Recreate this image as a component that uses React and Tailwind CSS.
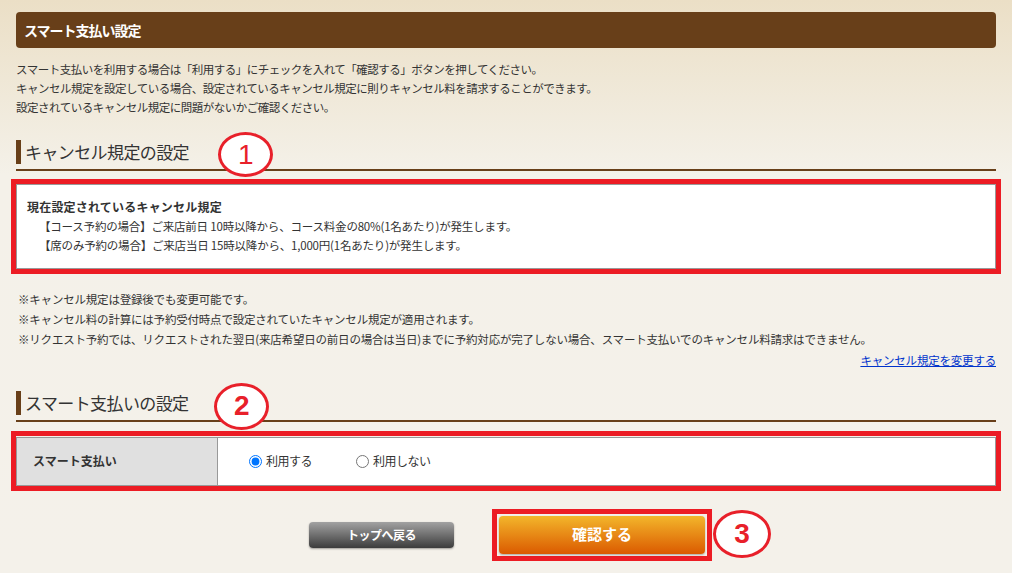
import React from "react";

function Circle({ n, className, bold }) {
  return (
    <div
      className={
        "absolute flex items-center justify-center rounded-[50%] border-[3px] border-[#e8202a] bg-white text-[#e8202a] font-['Liberation_Sans',Arial,sans-serif] leading-none " +
        className
      }
    >
      <span className={bold ? "text-[28px] font-bold" : "text-[28px]"}>{n}</span>
    </div>
  );
}

function SectionTitle({ children, circle }) {
  return (
    <div>
      <div className="relative flex h-6 items-center border-l-[5px] border-[#683f19] pl-[4px] text-[17px] tracking-[-0.6px] text-[#333]">
        {children}
        {circle}
      </div>
      <div className="mt-[5px] h-[2px] bg-[#683f19]" />
    </div>
  );
}

export default function App() {
  return (
    <div className="min-h-[573px] bg-[linear-gradient(to_bottom,#ebdfc6_0px,#f4f1e9_175px,#f4f1ea_100%)] px-4 pt-3 pb-3 font-['Noto_Sans_CJK_JP','Noto_Sans',sans-serif] text-[#333]">
      <div className="flex h-9 items-center rounded-[4px] bg-[#683f19] pl-2 text-[14px] font-bold tracking-[-1px] text-white">
        スマート支払い設定
      </div>

      <div className="mt-3 text-[11.5px] leading-[19px] tracking-[-0.5px]">
        <p>スマート支払いを利用する場合は「利用する」にチェックを入れて「確認する」ボタンを押してください。</p>
        <p>キャンセル規定を設定している場合、設定されているキャンセル規定に則りキャンセル料を請求することができます。</p>
        <p>設定されているキャンセル規定に問題がないかご確認ください。</p>
      </div>

      <div className="mt-[23px]">
        <SectionTitle circle={<Circle n="1" className="left-[197px] top-[-8px] h-[45px] w-[55px]" />}>
          キャンセル規定の設定
        </SectionTitle>
      </div>

      <div className="-mx-[5px] mt-2 border-[5px] border-[#ec1c24]">
        <div className="border border-[#999] bg-white py-3 pl-[10px] text-[11.5px] leading-[19.5px] tracking-[-0.2px]">
          <p className="text-[12px] font-bold tracking-[0.2px]">現在設定されているキャンセル規定</p>
          <p className="ml-3">【コース予約の場合】ご来店前日 10時以降から、コース料金の80%(1名あたり)が発生します。</p>
          <p className="ml-3">【席のみ予約の場合】ご来店当日 15時以降から、1,000円(1名あたり)が発生します。</p>
        </div>
      </div>

      <div className="mt-[15px] pl-[2px] text-[11.5px] leading-[20px] tracking-[-0.2px]">
        <p>※キャンセル規定は登録後でも変更可能です。</p>
        <p>※キャンセル料の計算には予約受付時点で設定されていたキャンセル規定が適用されます。</p>
        <p>※リクエスト予約では、リクエストされた翌日(来店希望日の前日の場合は当日)までに予約対応が完了しない場合、スマート支払いでのキャンセル料請求はできません。</p>
        <p className="mt-[1px] text-right">
          <a href="#" className="text-[#0033cc] underline">キャンセル規定を変更する</a>
        </p>
      </div>

      <div className="mt-[21px]">
        <SectionTitle circle={<Circle n="2" bold className="left-[193px] top-[-8px] h-[47px] w-[55px]" />}>
          スマート支払いの設定
        </SectionTitle>
      </div>

      <div className="-mx-[5px] mt-[9px] border-[5px] border-[#ec1c24] pt-[1px]">
        <div className="flex h-[49px] border border-[#999] bg-white text-[12px]">
          <div className="flex w-[201px] items-center border-r border-[#999] bg-[#e0e0e0] pl-4 font-bold">
            スマート支払い
          </div>
          <div className="flex items-center pl-[31px] tracking-[-0.5px]">
            <label className="flex items-center">
              <input type="radio" name="smart" defaultChecked className="m-0 h-[13px] w-[13px] accent-[#0075ff]" />
              <span className="ml-[4px]">利用する</span>
            </label>
            <label className="ml-[44px] flex items-center">
              <input type="radio" name="smart" className="m-0 h-[13px] w-[13px]" />
              <span className="ml-[4px]">利用しない</span>
            </label>
          </div>
        </div>
      </div>

      <div className="mt-[18px] flex items-center justify-center gap-[38px] pl-[9px]">
        <button className="flex h-[26px] w-[145px] items-center justify-center rounded-[4px] bg-[linear-gradient(to_bottom,#a2a2a2,#3c3c3c)] text-[12px] font-bold tracking-[-0.5px] text-white shadow-[0_1px_2px_rgba(0,0,0,0.35)]">
          トップへ戻る
        </button>
        <div className="relative border-[5px] border-[#ec1c24] p-[2px]">
          <button className="flex h-[38px] w-[206px] items-center justify-center rounded-[4px] bg-[linear-gradient(to_bottom,#f3b62b,#db5a00)] text-[15px] font-bold text-white shadow-[0_1px_2px_rgba(0,0,0,0.3)]">
            確認する
          </button>
          <Circle n="3" bold className="left-full top-[-4px] ml-[6px] h-[48px] w-[58px]" />
        </div>
      </div>
    </div>
  );
}
